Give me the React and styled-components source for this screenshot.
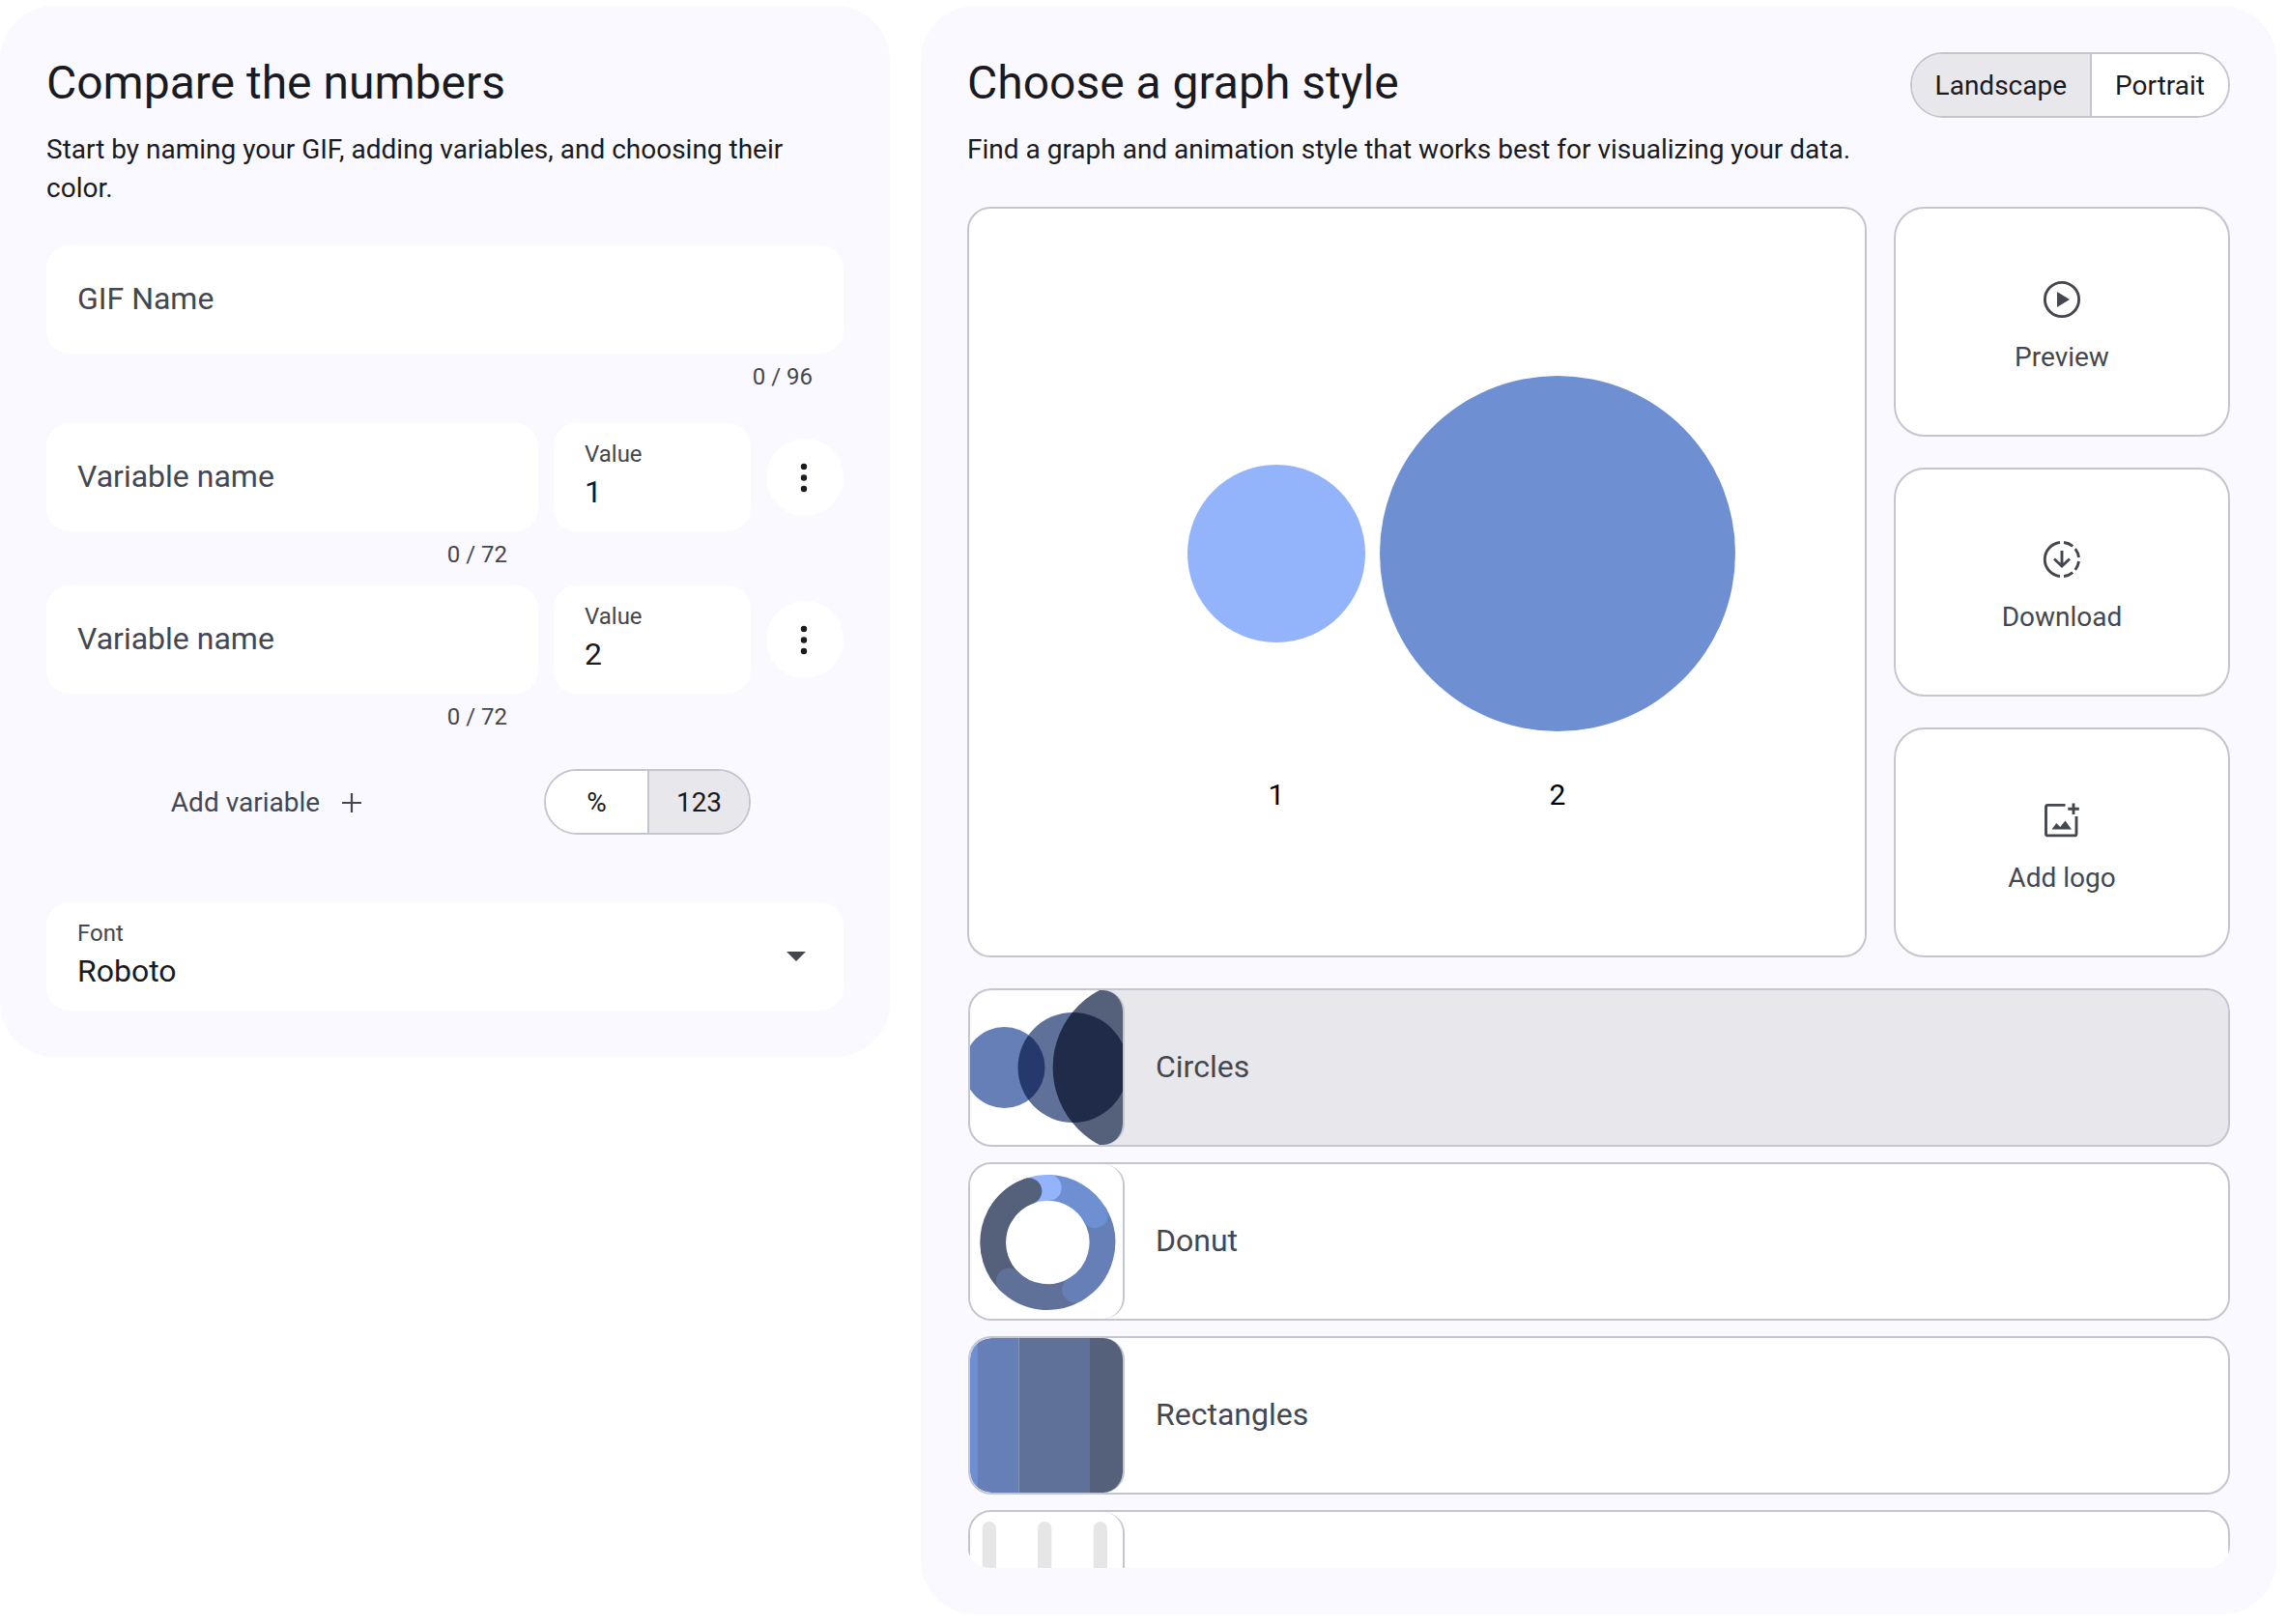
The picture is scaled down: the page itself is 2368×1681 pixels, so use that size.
import React, { useState } from "react";
import styled, { createGlobalStyle } from "styled-components";

const GlobalStyle = createGlobalStyle`
  * {
    box-sizing: border-box;
  }

  body {
    margin: 0;
    background: #fff;
    color: #1a1b20;
    font-family: Roboto, "Liberation Sans", sans-serif;
  }

  button, input, select {
    font-family: inherit;
  }
`;

const Page = styled.main`
  display: grid;
  grid-template-columns: minmax(0, 921fr) minmax(0, 1403fr);
  align-items: start;
  gap: 32px;
  padding: 6px 12px 10px 0;
`;

const Panel = styled.section`
  padding: 48px;
  border-radius: 56px;
  background: #faf9ff;
`;

const Header = styled.header`
  display: flex;
  justify-content: space-between;
  align-items: flex-start;
  margin-bottom: 39px;
`;

const Title = styled.h1`
  margin: 0 0 17px;
  font-size: 48px;
  font-weight: 400;
  line-height: 64px;
`;

const Description = styled.p`
  margin: 0;
  font-size: 28px;
  line-height: 40px;
`;

// ---- form fields ----

const FieldBlock = styled.div`
  flex: ${(props) => props.$flex || "none"};
  min-width: 0;
`;

const Box = styled.label`
  display: flex;
  align-items: center;
  height: 112px;
  padding: 16px 32px;
  border-radius: 24px;
  background: #fff;
`;

const BoxText = styled.span`
  display: flex;
  flex-direction: column;
  flex: 1;
  min-width: 0;
`;

const BoxLabel = styled.span`
  font-size: 24px;
  line-height: 32px;
  color: #44474f;
`;

const Input = styled.input`
  width: 100%;
  height: 48px;
  padding: 0 0 2px;
  border: none;
  outline: none;
  background: transparent;
  font-size: 32px;
  color: #1a1b20;

  &::placeholder {
    color: #44474f;
    opacity: 1;
  }
`;

const Select = styled.select`
  width: 100%;
  height: 48px;
  padding: 0 0 2px;
  border: none;
  outline: none;
  appearance: none;
  background: transparent;
  font-size: 32px;
  color: #1a1b20;
`;

const ArrowWrap = styled.span`
  display: flex;
  padding: 0 7px;
  pointer-events: none;
`;

const Counter = styled.div`
  padding: 8px 32px 0;
  font-size: 24px;
  line-height: 32px;
  text-align: right;
  color: #44474f;
`;

const VariableRow = styled.div`
  display: flex;
  gap: 16px;
  margin-top: ${(props) => (props.$first ? "32px" : "16px")};
`;

const MenuButton = styled.button`
  flex: none;
  display: flex;
  align-items: center;
  justify-content: center;
  width: 80px;
  height: 80px;
  margin-top: 16px;
  padding: 0;
  border: none;
  border-radius: 50%;
  background: #fff;
  color: #1a1b20;
`;

const Actions = styled.div`
  display: flex;
  align-items: center;
  gap: 52px;
  margin: 38px 96px 70px 0;
`;

const AddArea = styled.div`
  display: flex;
  justify-content: center;
  flex: 1;
`;

const AddButton = styled.button`
  display: flex;
  align-items: center;
  gap: 15px;
  padding: 2px 0 0;
  border: none;
  background: transparent;
  font-size: 28px;
  line-height: 40px;
  color: #44474f;
`;

// ---- segmented buttons ----

const Segments = styled.div`
  flex: none;
  display: flex;
  height: 68px;
  border: 2px solid #c3c6cf;
  border-radius: 34px;
  overflow: hidden;
`;

const Segment = styled.button`
  min-width: ${(props) => props.$min || "0"};
  padding: 2px 24px 0;
  border: none;
  background: ${(props) => (props.$selected ? "#e8e7ec" : "#fff")};
  font-size: 28px;
  line-height: 40px;
  color: #1a1b20;

  & + & {
    border-left: 2px solid #c3c6cf;
  }
`;

// ---- graph area ----

const Stage = styled.div`
  display: flex;
  gap: 28px;
`;

const Canvas = styled.div`
  flex: 1;
  min-width: 0;
  border: 2px solid #c3c6cf;
  border-radius: 24px;
  background: #fff;
  overflow: hidden;

  svg {
    display: block;
    width: 100%;
  }
`;

const Cards = styled.div`
  flex: none;
  display: grid;
  grid-template-rows: repeat(3, 1fr);
  gap: 32px;
  width: 348px;
`;

const Card = styled.button`
  display: flex;
  flex-direction: column;
  align-items: center;
  justify-content: center;
  gap: 16px;
  padding: 10px 0 0;
  border: 2px solid #c3c6cf;
  border-radius: 32px;
  background: #fff;
  font-size: 28px;
  line-height: 40px;
  color: #44474f;
`;

const StyleList = styled.div`
  display: flex;
  flex-direction: column;
  gap: 16px;
  height: 600px;
  margin-top: 32px;
  padding-left: 1px;
  border-radius: 24px;
  overflow: hidden;
`;

const StyleRow = styled.button`
  flex: none;
  display: flex;
  align-items: center;
  gap: 32px;
  width: 100%;
  padding: 0;
  border: 2px solid #c3c6cf;
  border-radius: 24px;
  background: ${(props) => (props.$selected ? "#e8e7ec" : "#fff")};
  text-align: left;
  color: #44474f;
  overflow: hidden;
`;

const StyleName = styled.span`
  padding-bottom: 2px;
  font-size: 32px;
  line-height: 48px;
`;

const Thumb = styled.span`
  display: block;
  width: 160px;
  height: 160px;
  border-right: 2px solid #c3c6cf;
  border-radius: 22px;
  background: #fff;
  overflow: hidden;

  svg {
    display: block;
    isolation: isolate;
  }

  circle {
    mix-blend-mode: multiply;
  }
`;

// ---- icons ----

const MoreIcon = () => (
  <svg width="48" height="48" viewBox="0 0 48 48" fill="currentColor" aria-hidden="true">
    <circle cx="23" cy="13" r="3.2" />
    <circle cx="23" cy="24.5" r="3.2" />
    <circle cx="23" cy="36" r="3.2" />
  </svg>
);

const PlusIcon = () => (
  <svg width="36" height="36" viewBox="0 0 36 36" fill="none" stroke="currentColor" strokeWidth="2.2" aria-hidden="true">
    <path d="M18 8v20M8 18h20" />
  </svg>
);

const ArrowIcon = () => (
  <svg width="20" height="10" viewBox="0 0 20 10" fill="#44474f" aria-hidden="true">
    <path d="M0 0h20L10 10z" />
  </svg>
);

const PlayIcon = () => (
  <svg width="48" height="48" viewBox="0 0 48 48" aria-hidden="true">
    <circle cx="24" cy="24" r="17.6" fill="none" stroke="currentColor" strokeWidth="2.9" />
    <path d="M19 16v16l13-8z" fill="currentColor" />
  </svg>
);

const DownloadIcon = () => (
  <svg width="48" height="48" viewBox="0 0 48 48" fill="none" stroke="currentColor" strokeWidth="2.9" aria-hidden="true">
    <path d="M22 6.5a17.6 17.6 0 0 0 0 35" />
    <path d="M26 6.5a17.6 17.6 0 0 1 9.2 3.9" />
    <path d="M37.8 13.2A17.6 17.6 0 0 1 41.5 22" />
    <path d="M41.5 26a17.6 17.6 0 0 1-3.7 8.8" />
    <path d="M35.2 37.6a17.6 17.6 0 0 1-9.2 3.9" />
    <path d="M24 15v15.5M16 23.5l8 7.5 8-7.5" />
  </svg>
);

const AddPhotoIcon = () => (
  <svg width="48" height="48" viewBox="0 0 48 48" fill="none" stroke="currentColor" strokeWidth="2.9" aria-hidden="true">
    <path d="M27.5 8.4H9.5a2 2 0 0 0-2 2v27.5a2 2 0 0 0 2 2H37a2 2 0 0 0 2-2V20" />
    <path d="M36 6.5V18M30.3 12.2h11.5" />
    <path d="M13.5 33.5l4.8-6.4 4 4 5.2-6.6 6.5 9z" fill="currentColor" stroke="none" />
  </svg>
);

// ---- style thumbnails ----

const CirclesThumb = () => (
  <svg width="160" height="160" viewBox="0 0 160 160" aria-hidden="true">
    <circle cx="35.5" cy="80" r="42" fill="#6680b7" />
    <circle cx="106.5" cy="80" r="57" fill="#5f7198" />
    <circle cx="176" cy="80" r="90.4" fill="#55607b" />
  </svg>
);

const point = (deg) => {
  const a = (deg * Math.PI) / 180;
  return `${80.3 + 56.6 * Math.sin(a)} ${81 - 56.6 * Math.cos(a)}`;
};

const arc = (from, to) => `M${point(from)}A56.6 56.6 0 0 1 ${point(to)}`;

const DonutThumb = () => (
  <svg width="160" height="160" viewBox="0 0 160 160" fill="none" strokeWidth="26.8" strokeLinecap="round" aria-hidden="true">
    <path d={arc(225, 340)} stroke="#55607b" />
    <path d={arc(150, 225)} stroke="#5f7198" />
    <path d={arc(60, 150)} stroke="#6680b7" />
    <path d={arc(1, 60)} stroke="#6e90d2" />
    <path d={arc(-20, 1)} stroke="#93b3fb" />
    {/* the last segment ends on top of the first one */}
    <path d={arc(300, 340)} stroke="#55607b" />
  </svg>
);

const RectanglesThumb = () => (
  <svg width="160" height="160" viewBox="0 0 160 160" aria-hidden="true">
    <rect width="8" height="160" fill="#6e90d2" />
    <rect x="7.7" width="43" height="160" fill="#6680b7" />
    <rect x="50.7" width="73.3" height="160" fill="#5f7198" />
    <rect x="124" width="36" height="160" fill="#55607b" />
  </svg>
);

const BarsThumb = () => (
  <svg width="160" height="160" viewBox="0 0 160 160" fill="#e6e6e6" aria-hidden="true">
    <rect x="12.7" y="10" width="14.3" height="140" rx="7" />
    <rect x="70" y="10" width="14.3" height="140" rx="7" />
    <rect x="127.7" y="10" width="14.3" height="140" rx="7" />
  </svg>
);

const graphStyles = [
  { id: "circles", name: "Circles", thumb: <CirclesThumb /> },
  { id: "donut", name: "Donut", thumb: <DonutThumb /> },
  { id: "rectangles", name: "Rectangles", thumb: <RectanglesThumb /> },
  { id: "bars", thumb: <BarsThumb /> },
];

const Variable = ({ value, first }) => (
  <VariableRow $first={first}>
    <FieldBlock $flex="1">
      <Box>
        <Input placeholder="Variable name" aria-label="Variable name" maxLength={72} />
      </Box>
      <Counter>0 / 72</Counter>
    </FieldBlock>
    <FieldBlock $flex="0 0 204px">
      <Box>
        <BoxText>
          <BoxLabel>Value</BoxLabel>
          <Input defaultValue={value} />
        </BoxText>
      </Box>
    </FieldBlock>
    <MenuButton type="button" aria-label="Variable options">
      <MoreIcon />
    </MenuButton>
  </VariableRow>
);

const App = () => {
  const [unit, setUnit] = useState("123");
  const [layout, setLayout] = useState("Landscape");
  const [graph, setGraph] = useState("circles");

  return (
    <React.Fragment>
      <GlobalStyle />
      <Page>
        <Panel>
          <Header>
            <div>
              <Title>Compare the numbers</Title>
              <Description>
                Start by naming your GIF, adding variables, and choosing their color.
              </Description>
            </div>
          </Header>

          <FieldBlock>
            <Box>
              <Input placeholder="GIF Name" aria-label="GIF Name" maxLength={96} />
            </Box>
            <Counter>0 / 96</Counter>
          </FieldBlock>

          <Variable value="1" first />
          <Variable value="2" />

          <Actions>
            <AddArea>
              <AddButton type="button">
                Add variable
                <PlusIcon />
              </AddButton>
            </AddArea>
            <Segments>
              {["%", "123"].map((u) => (
                <Segment
                  key={u}
                  type="button"
                  $min="105px"
                  $selected={unit === u}
                  aria-pressed={unit === u}
                  onClick={() => setUnit(u)}
                >
                  {u}
                </Segment>
              ))}
            </Segments>
          </Actions>

          <Box>
            <BoxText>
              <BoxLabel>Font</BoxLabel>
              <Select defaultValue="Roboto">
                <option>Roboto</option>
              </Select>
            </BoxText>
            <ArrowWrap>
              <ArrowIcon />
            </ArrowWrap>
          </Box>
        </Panel>

        <Panel>
          <Header>
            <div>
              <Title as="h2">Choose a graph style</Title>
              <Description>
                Find a graph and animation style that works best for visualizing your data.
              </Description>
            </div>
            <Segments>
              {["Landscape", "Portrait"].map((l) => (
                <Segment
                  key={l}
                  type="button"
                  $selected={layout === l}
                  aria-pressed={layout === l}
                  onClick={() => setLayout(l)}
                >
                  {l}
                </Segment>
              ))}
            </Segments>
          </Header>

          <Stage>
            <Canvas>
              <svg viewBox="0 0 927 773" role="img" aria-label="Circles graph">
                <circle cx="318" cy="357" r="92" fill="#93b3fb" />
                <circle cx="609" cy="357" r="184" fill="#6e90d2" />
                <g fontSize="30" textAnchor="middle" fill="#000">
                  <text x="318" y="617">1</text>
                  <text x="609" y="617">2</text>
                </g>
              </svg>
            </Canvas>
            <Cards>
              <Card type="button">
                <PlayIcon />
                Preview
              </Card>
              <Card type="button">
                <DownloadIcon />
                Download
              </Card>
              <Card type="button">
                <AddPhotoIcon />
                Add logo
              </Card>
            </Cards>
          </Stage>

          <StyleList>
            {graphStyles.map((g) => (
              <StyleRow
                key={g.id}
                type="button"
                $selected={graph === g.id}
                aria-pressed={graph === g.id}
                aria-label={g.name || g.id}
                onClick={() => setGraph(g.id)}
              >
                <Thumb>{g.thumb}</Thumb>
                {g.name && <StyleName>{g.name}</StyleName>}
              </StyleRow>
            ))}
          </StyleList>
        </Panel>
      </Page>
    </React.Fragment>
  );
};

export default App;
